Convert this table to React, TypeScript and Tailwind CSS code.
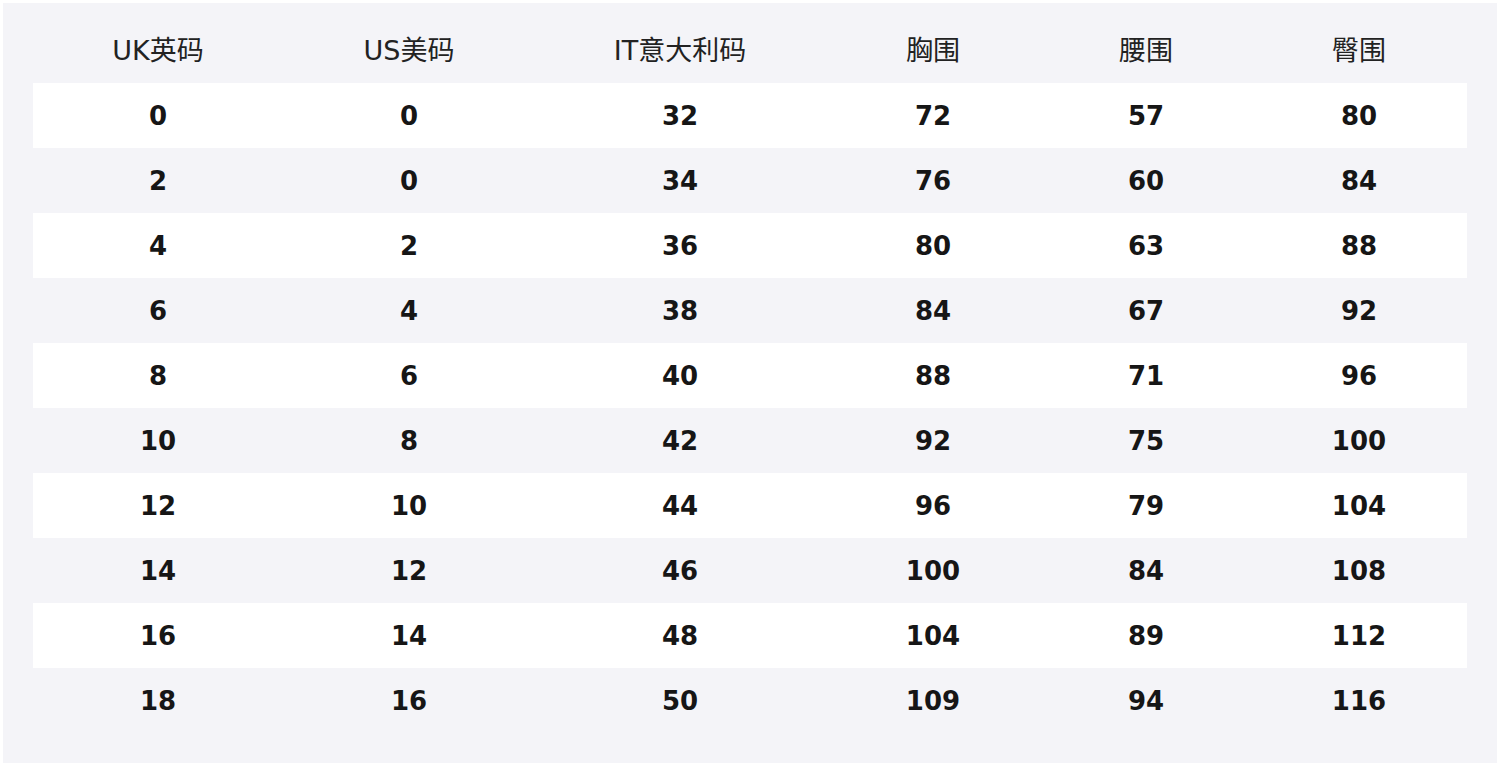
import React from "react";

const headers = ["UK英码", "US美码", "IT意大利码", "胸围", "腰围", "臀围"];
const rows: number[][] = [
  [0, 0, 32, 72, 57, 80],
  [2, 0, 34, 76, 60, 84],
  [4, 2, 36, 80, 63, 88],
  [6, 4, 38, 84, 67, 92],
  [8, 6, 40, 88, 71, 96],
  [10, 8, 42, 92, 75, 100],
  [12, 10, 44, 96, 79, 104],
  [14, 12, 46, 100, 84, 108],
  [16, 14, 48, 104, 89, 112],
  [18, 16, 50, 109, 94, 116],
];

const cols = "grid grid-cols-[250px_252px_290px_216px_210px_216px]";

export default function App() {
  return (
    <div className="w-[1500px] h-[766px] bg-white p-[3px]">
      <div
        className="h-full bg-[#f4f4f8] pt-[16px] px-[30px]"
        style={{ fontFamily: '"DejaVu Sans", "Noto Sans CJK SC", sans-serif' }}
      >
        <div className={`${cols} h-[64px] items-center text-[27px] text-[#222]`}>
          {headers.map((h) => (
            <div key={h} className="text-center">
              {h}
            </div>
          ))}
        </div>
        {rows.map((r, i) => (
          <div
            key={i}
            className={`${cols} h-[65px] items-center pt-[2px] text-[26px] font-bold text-[#161616] ${
              i % 2 === 0 ? "bg-white" : ""
            }`}
          >
            {r.map((v, j) => (
              <div key={j} className="text-center">
                {v}
              </div>
            ))}
          </div>
        ))}
      </div>
    </div>
  );
}
